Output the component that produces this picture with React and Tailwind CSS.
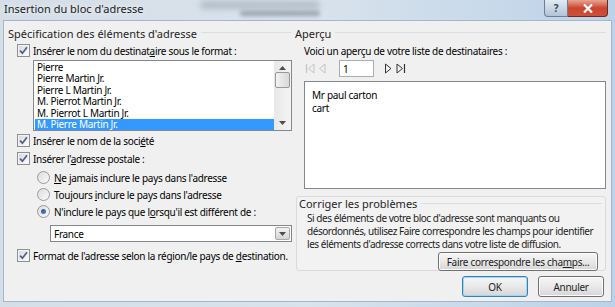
import React from 'react';

const font = "font-['Segoe_UI','Noto_Sans',sans-serif]";

const CheckBox = () => (
  <span className="flex h-[13px] w-[13px] shrink-0 items-center justify-center border border-[#8e8f8f] bg-white">
    <span className="flex h-[11px] w-[11px] items-center justify-center border border-[#f4f4f4] bg-gradient-to-br from-[#dadada] to-[#fbfbfb]">
      <svg width="9" height="9" viewBox="0 0 9 9">
        <path d="M1 4.6 L3.4 7.2 L8 1.2" fill="none" stroke="#4c5f8e" strokeWidth="1.7" />
      </svg>
    </span>
  </span>
);

const Radio = ({ on }) => (
  <span className="flex h-[13px] w-[13px] shrink-0 items-center justify-center rounded-full border border-[#9a9a9a] bg-gradient-to-br from-[#dcdcdc] to-[#fafafa]">
    {on && <span className="h-[5px] w-[5px] rounded-full bg-gradient-to-br from-[#2f4f8a] to-[#5a86c8]" />}
  </span>
);

const GroupHeader = ({ children, className = '' }) => (
  <div className={`flex items-center gap-[4px] ${className}`}>
    <span className="whitespace-nowrap text-[11px] tracking-normal text-[#1e1e1e]">{children}</span>
    <span className="h-[2px] flex-1 border-t border-[#d5dfe5] border-b-white" />
  </div>
);

const Button = ({ children, focus, className = '' }) => (
  <button
    className={`flex items-center justify-center rounded-[3px] border bg-gradient-to-b from-[#f6f6f6] via-[#e9e9e9] to-[#d6d6d6] text-[#1e1e1e] ${
      focus ? 'border-[#3c7fb1] shadow-[inset_0_0_0_1px_#9ad8f5]' : 'border-[#707070] shadow-[inset_0_0_0_1px_#fcfcfc]'
    } ${className}`}
  >
    {children}
  </button>
);

const items = [
  'Pierre',
  'Pierre Martin Jr.',
  'Pierre L Martin Jr.',
  'M. Pierrot Martin Jr.',
  'M. Pierrot L Martin Jr.',
  'M. Pierre Martin Jr.',
];

const Arrow = ({ up }) => (
  <svg width="7" height="4" viewBox="0 0 7 4">
    <path d={up ? 'M0 4 L3.5 0 L7 4 Z' : 'M0 0 L3.5 4 L7 0 Z'} fill="#4d4d4d" />
  </svg>
);

export default function App() {
  return (
    <div className={`h-[307px] w-[615px] overflow-hidden bg-gradient-to-r from-[#d5dee7] via-[#d9e3ec] to-[#bcd2e8] text-[10px] leading-none tracking-[-0.3px] ${font}`}>
      {/* title bar */}
      <div className="relative flex h-[20px] items-start">
        <div className="absolute left-[200px] top-[1px] h-[8px] w-[120px] rounded-full bg-[#8a97a6] opacity-50 blur-[3px]" />
        <div className="absolute left-[240px] top-[11px] h-[5px] w-[80px] rounded-full bg-[#3d4650] opacity-40 blur-[2px]" />
        <span className="relative ml-[4px] mt-[3px] text-[11px] tracking-normal text-[#1b1b1b] [text-shadow:0_0_6px_#fff]">Insertion du bloc d'adresse</span>
        <div className="relative ml-auto mr-[7px] flex">
          <div className="flex h-[17px] w-[24px] items-center justify-center rounded-bl-[4px] border border-t-0 border-[#6d7d92] bg-gradient-to-b from-[#e3ebf3] to-[#b2c3d6] text-[10px] font-bold text-[#37475c]">?</div>
          <div className="flex h-[17px] w-[40px] items-center justify-center rounded-br-[4px] border border-l-0 border-t-0 border-[#6b2a22] bg-gradient-to-b from-[#e8a493] via-[#c9452f] to-[#d0503b]">
            <svg width="10" height="9" viewBox="0 0 10 9">
              <path d="M1 0.5 L9 8.5 M9 0.5 L1 8.5" stroke="#fff" strokeWidth="2.2" />
            </svg>
          </div>
        </div>
      </div>

      {/* client area */}
      <div className="mx-[3px] flex h-[282px] flex-col border border-[#a3b6ca] bg-[#f0f0f0]">
        <div className="flex flex-1">
          {/* left column */}
          <div className="flex w-[291px] flex-col pl-[4px] pt-[5px]">
            <GroupHeader className="h-[14px] pr-[4px]">Spécification des éléments d'adresse</GroupHeader>
            <label className="mt-[2px] flex h-[17px] items-center gap-[3px] pl-[9px]">
              <CheckBox />
              <span>Insérer le nom du destinat<u>a</u>ire sous le format :</span>
            </label>
            <div className="ml-[25px] mr-[3px] mt-[1px] flex h-[71px] border border-[#828790] bg-white">
              <div className="flex flex-1 flex-col pl-[1px] pt-[1px]">
                {items.map((t, i) => (
                  <div
                    key={t}
                    className={`h-[11.4px] pl-[2px] leading-[11.4px] ${i === 5 ? 'bg-[#3399ff] text-white' : 'text-black'}`}
                  >
                    {t}
                  </div>
                ))}
              </div>
              <div className="flex w-[17px] flex-col items-center justify-between bg-gradient-to-r from-[#e8e8e8] to-[#f4f4f4] py-[5px]">
                <Arrow up />
                <div className="mt-[2px] h-[16px] w-[15px] rounded-[2px] border border-[#999] bg-gradient-to-r from-[#f3f3f3] to-[#d9d9d9]" />
                <div className="flex-1" />
                <Arrow />
              </div>
            </div>
            <label className="mt-[1px] flex h-[17px] items-center gap-[3px] pl-[9px]">
              <CheckBox />
              <span>Insérer le nom de la soci<u>é</u>té</span>
            </label>
            <label className="mt-[1px] flex h-[17px] items-center gap-[3px] pl-[9px]">
              <CheckBox />
              <span>Insérer l'<u>a</u>dresse postale :</span>
            </label>
            <div className="mt-[2px] flex flex-col pl-[29px]">
              <label className="flex h-[17px] items-center gap-[4px]">
                <Radio />
                <span><u>N</u>e jamais inclure le pays dans l'adresse</span>
              </label>
              <label className="flex h-[17px] items-center gap-[4px]">
                <Radio />
                <span>Toujours <u>i</u>nclure le pays dans l'adresse</span>
              </label>
              <label className="flex h-[17px] items-center gap-[4px]">
                <Radio on />
                <span>N'inclure le pays que l<u>o</u>rsqu'il est différent de :</span>
              </label>
            </div>
            <div className="ml-[42px] mr-[3px] mt-[5px] flex h-[17px] border border-[#828790] bg-white">
              <span className="flex flex-1 items-center pl-[3px]">France</span>
              <span className="m-[1px] flex w-[15px] items-center justify-center rounded-[2px] border border-[#a8a8a8] bg-gradient-to-b from-[#f2f2f2] to-[#d4d4d4]">
                <Arrow />
              </span>
            </div>
            <label className="mt-[5px] flex h-[17px] items-center gap-[3px] pl-[9px]">
              <CheckBox />
              <span>Format de l'adresse selon la région/le pays de <u>d</u>estination.</span>
            </label>
          </div>

          {/* right column */}
          <div className="flex flex-1 flex-col pr-[5px] pt-[5px]">
            <GroupHeader className="h-[14px]">Aperçu</GroupHeader>
            <div className="mt-[2px] flex h-[17px] items-center pl-[9px]">Voici un aperçu de votre liste de destinataires :</div>
            <div className="mt-[1px] flex h-[17px] items-center pl-[10px]">
              <svg width="26" height="11" viewBox="0 0 26 11">
                <path d="M1.5 1 V10" stroke="#c4c4c4" strokeWidth="1.2" />
                <path d="M9 1 L3.5 5.5 L9 10 Z" fill="none" stroke="#c4c4c4" />
                <path d="M20 1 L14.5 5.5 L20 10 Z" fill="none" stroke="#c4c4c4" />
              </svg>
              <div className="ml-[8px] flex h-[17px] w-[35px] items-center border border-[#abadb3] bg-white pl-[3px]">1</div>
              <svg className="ml-[10px]" width="26" height="11" viewBox="0 0 26 11">
                <path d="M1.5 1 L7 5.5 L1.5 10 Z" fill="none" stroke="#333" />
                <path d="M13 1 L18.5 5.5 L13 10 Z" fill="none" stroke="#333" />
                <path d="M20.5 1 V10" stroke="#333" strokeWidth="1.2" />
              </svg>
            </div>
            <div className="ml-[9px] mt-[4px] flex h-[108px] flex-col gap-[3px] border border-[#828790] bg-white pl-[7px] pt-[8px]">
              <span>Mr paul carton</span>
              <span>cart</span>
            </div>
            <div className="ml-[1px] mt-[7px] flex h-[75px] flex-col rounded-[3px] border border-[#dadada] bg-[#f2f2f2] pl-[2px] pr-[3px] pt-[1px]">
              <GroupHeader className="h-[13px]">Corriger les problèmes</GroupHeader>
              <p className="mt-[3px] whitespace-nowrap pl-[8px] leading-[13px] tracking-[-0.45px] text-[#1e1e1e]">
                Si des éléments de votre bloc d'adresse sont manquants ou
                <br />
                désordonnés, utilisez Faire correspondre les champs pour identifier
                <br />
                les éléments d'adresse corrects dans votre liste de diffusion.
              </p>
              <div className="mt-[1px] flex justify-end pr-[4px]">
                <Button className="h-[19px] w-[160px]">Faire correspondre les cha<u>m</u>ps...</Button>
              </div>
            </div>
            <div className="mt-[5px] flex justify-end gap-[10px] pr-[2px]">
              <Button focus className="h-[21px] w-[66px]">OK</Button>
              <Button className="h-[21px] w-[66px]">Annuler</Button>
            </div>
          </div>
        </div>
      </div>
    </div>
  );
}
